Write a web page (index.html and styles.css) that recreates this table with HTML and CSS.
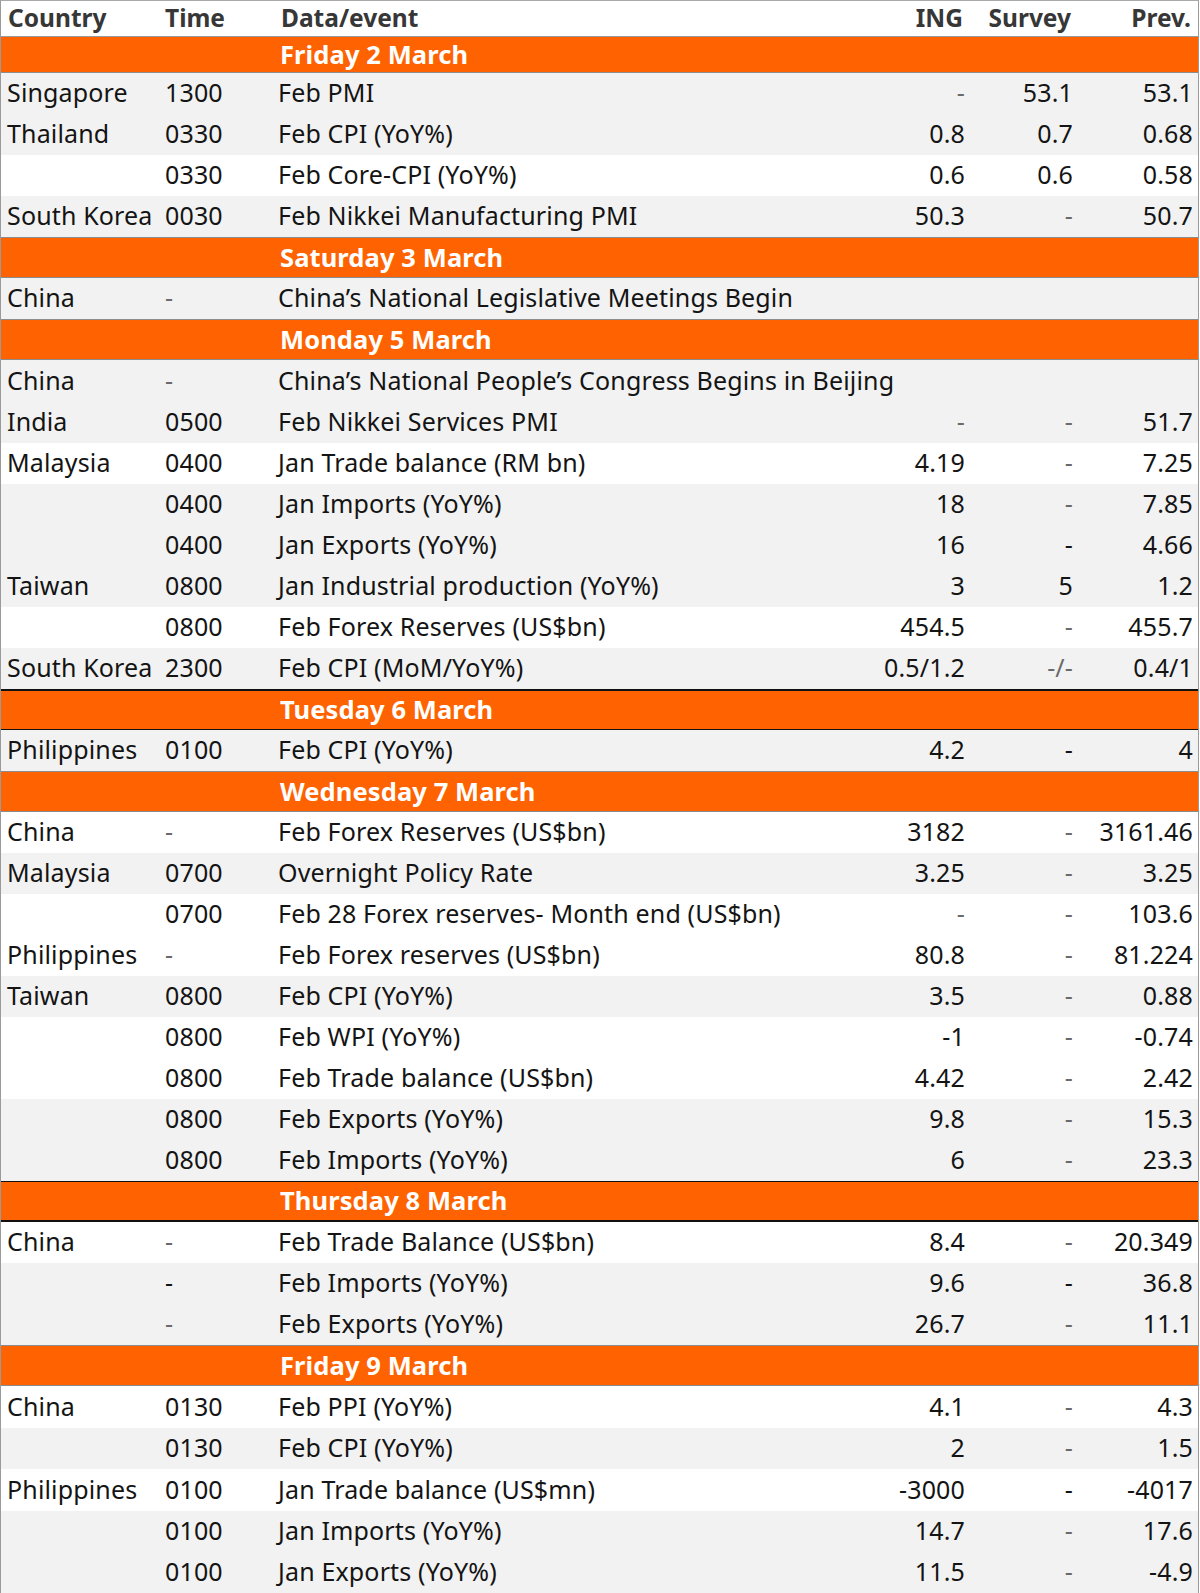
FILE: index.html
```html
<!DOCTYPE html>
<html lang="en">
<head>
<meta charset="utf-8">
<title>Asia calendar</title>
<link rel="stylesheet" href="styles.css">
</head>
<body>
<div class="table">
  <div class="row head">
    <div class="c">Country</div><div class="t">Time</div><div class="e">Data/event</div><div class="n">ING</div><div class="n">Survey</div><div class="n p">Prev.</div>
  </div>

  <div class="band b-grey first"><div class="title">Friday 2 March</div></div>
  <div class="row g"><div class="c">Singapore</div><div class="t">1300</div><div class="e">Feb PMI</div><div class="n"><span class="d">-</span></div><div class="n">53.1</div><div class="n p">53.1</div></div>
  <div class="row g"><div class="c">Thailand</div><div class="t">0330</div><div class="e">Feb CPI (YoY%)</div><div class="n">0.8</div><div class="n">0.7</div><div class="n p">0.68</div></div>
  <div class="row"><div class="c"></div><div class="t">0330</div><div class="e">Feb Core-CPI (YoY%)</div><div class="n">0.6</div><div class="n">0.6</div><div class="n p">0.58</div></div>
  <div class="row g"><div class="c">South Korea</div><div class="t">0030</div><div class="e">Feb Nikkei Manufacturing PMI</div><div class="n">50.3</div><div class="n"><span class="d">-</span></div><div class="n p">50.7</div></div>

  <div class="band b-grey top-grey"><div class="title">Saturday 3 March</div></div>
  <div class="row g"><div class="c">China</div><div class="t"><span class="d">-</span></div><div class="e">China’s National Legislative Meetings Begin</div><div class="n"></div><div class="n"></div><div class="n p"></div></div>

  <div class="band b-grey top-grey"><div class="title">Monday 5 March</div></div>
  <div class="row g tall"><div class="c">China</div><div class="t"><span class="d">-</span></div><div class="e">China’s National People’s Congress Begins in Beijing</div><div class="n"></div><div class="n"></div><div class="n p"></div></div>
  <div class="row g"><div class="c">India</div><div class="t">0500</div><div class="e">Feb Nikkei Services PMI</div><div class="n"><span class="d">-</span></div><div class="n"><span class="d">-</span></div><div class="n p">51.7</div></div>
  <div class="row"><div class="c">Malaysia</div><div class="t">0400</div><div class="e">Jan Trade balance (RM bn)</div><div class="n">4.19</div><div class="n"><span class="d">-</span></div><div class="n p">7.25</div></div>
  <div class="row g"><div class="c"></div><div class="t">0400</div><div class="e">Jan Imports (YoY%)</div><div class="n">18</div><div class="n"><span class="d">-</span></div><div class="n p">7.85</div></div>
  <div class="row g"><div class="c"></div><div class="t">0400</div><div class="e">Jan Exports (YoY%)</div><div class="n">16</div><div class="n">-</div><div class="n p">4.66</div></div>
  <div class="row g"><div class="c">Taiwan</div><div class="t">0800</div><div class="e">Jan Industrial production (YoY%)</div><div class="n">3</div><div class="n">5</div><div class="n p">1.2</div></div>
  <div class="row"><div class="c"></div><div class="t">0800</div><div class="e">Feb Forex Reserves (US$bn)</div><div class="n">454.5</div><div class="n"><span class="d">-</span></div><div class="n p">455.7</div></div>
  <div class="row g"><div class="c">South Korea</div><div class="t">2300</div><div class="e">Feb CPI (MoM/YoY%)</div><div class="n">0.5/1.2</div><div class="n"><span class="d">-/-</span></div><div class="n p">0.4/1</div></div>

  <div class="band top-black2 b-black"><div class="title">Tuesday 6 March</div></div>
  <div class="row g"><div class="c">Philippines</div><div class="t">0100</div><div class="e">Feb CPI (YoY%)</div><div class="n">4.2</div><div class="n">-</div><div class="n p">4</div></div>

  <div class="band b-grey top-grey"><div class="title">Wednesday 7 March</div></div>
  <div class="row"><div class="c">China</div><div class="t"><span class="d">-</span></div><div class="e">Feb Forex Reserves (US$bn)</div><div class="n">3182</div><div class="n"><span class="d">-</span></div><div class="n p">3161.46</div></div>
  <div class="row g"><div class="c">Malaysia</div><div class="t">0700</div><div class="e">Overnight Policy Rate</div><div class="n">3.25</div><div class="n"><span class="d">-</span></div><div class="n p">3.25</div></div>
  <div class="row"><div class="c"></div><div class="t">0700</div><div class="e">Feb 28 Forex reserves- Month end (US$bn)</div><div class="n"><span class="d">-</span></div><div class="n"><span class="d">-</span></div><div class="n p">103.6</div></div>
  <div class="row"><div class="c">Philippines</div><div class="t"><span class="d">-</span></div><div class="e">Feb Forex reserves (US$bn)</div><div class="n">80.8</div><div class="n"><span class="d">-</span></div><div class="n p">81.224</div></div>
  <div class="row g"><div class="c">Taiwan</div><div class="t">0800</div><div class="e">Feb CPI (YoY%)</div><div class="n">3.5</div><div class="n"><span class="d">-</span></div><div class="n p">0.88</div></div>
  <div class="row"><div class="c"></div><div class="t">0800</div><div class="e">Feb WPI (YoY%)</div><div class="n">-1</div><div class="n"><span class="d">-</span></div><div class="n p">-0.74</div></div>
  <div class="row"><div class="c"></div><div class="t">0800</div><div class="e">Feb Trade balance (US$bn)</div><div class="n">4.42</div><div class="n"><span class="d">-</span></div><div class="n p">2.42</div></div>
  <div class="row g"><div class="c"></div><div class="t">0800</div><div class="e">Feb Exports (YoY%)</div><div class="n">9.8</div><div class="n"><span class="d">-</span></div><div class="n p">15.3</div></div>
  <div class="row g"><div class="c"></div><div class="t">0800</div><div class="e">Feb Imports (YoY%)</div><div class="n">6</div><div class="n"><span class="d">-</span></div><div class="n p">23.3</div></div>

  <div class="band top-black b-black2"><div class="title">Thursday 8 March</div></div>
  <div class="row"><div class="c">China</div><div class="t"><span class="d">-</span></div><div class="e">Feb Trade Balance (US$bn)</div><div class="n">8.4</div><div class="n"><span class="d">-</span></div><div class="n p">20.349</div></div>
  <div class="row g"><div class="c"></div><div class="t">-</div><div class="e">Feb Imports (YoY%)</div><div class="n">9.6</div><div class="n">-</div><div class="n p">36.8</div></div>
  <div class="row g"><div class="c"></div><div class="t"><span class="d">-</span></div><div class="e">Feb Exports (YoY%)</div><div class="n">26.7</div><div class="n"><span class="d">-</span></div><div class="n p">11.1</div></div>

  <div class="band b-grey top-grey"><div class="title">Friday 9 March</div></div>
  <div class="row tall"><div class="c">China</div><div class="t">0130</div><div class="e">Feb PPI (YoY%)</div><div class="n">4.1</div><div class="n"><span class="d">-</span></div><div class="n p">4.3</div></div>
  <div class="row g"><div class="c"></div><div class="t">0130</div><div class="e">Feb CPI (YoY%)</div><div class="n">2</div><div class="n"><span class="d">-</span></div><div class="n p">1.5</div></div>
  <div class="row tall"><div class="c">Philippines</div><div class="t">0100</div><div class="e">Jan Trade balance (US$mn)</div><div class="n">-3000</div><div class="n">-</div><div class="n p">-4017</div></div>
  <div class="row g"><div class="c"></div><div class="t">0100</div><div class="e">Jan Imports (YoY%)</div><div class="n">14.7</div><div class="n"><span class="d">-</span></div><div class="n p">17.6</div></div>
  <div class="row g last"><div class="c"></div><div class="t">0100</div><div class="e">Jan Exports (YoY%)</div><div class="n">11.5</div><div class="n"><span class="d">-</span></div><div class="n p">-4.9</div></div>
</div>
</body>
</html>
```

FILE: styles.css
```css
* { box-sizing: border-box; }

html, body {
  margin: 0;
  padding: 0;
  background: #ffffff;
}

body {
  font-family: "Noto Sans", "Open Sans", "DejaVu Sans", sans-serif;
  font-size: 25px;
  letter-spacing: 0.15px;
  color: #141414;
}

.table {
  width: 1199px;
  border-left: 1px solid #9a9a9a;
  border-right: 1px solid #9a9a9a;
  border-top: 1px solid #a8a8a8;
}

.row,
.band {
  display: grid;
  grid-template-columns: 158px 113px 1fr 108px 108px 122px;
  align-items: center;
  height: 41px;
  white-space: nowrap;
}

.row.tall { height: 42px; }

.row.g { background: #f2f2f2; }

.row.last { border-bottom: 1px solid #9a9a9a; height: 42px; }

.row > div { padding-bottom: 3px; }

.head {
  height: 36px;
  font-weight: 700;
  color: #373737;
  border-bottom: 1px solid #9a9a9a;
  font-size: 24.5px;
  letter-spacing: 0;
}

.c { padding-left: 6px; }
.t { padding-left: 6px; }
.e { padding-left: 6px; overflow: visible; }
.n { text-align: right; padding-right: 3px; }
.n.p { padding-right: 5px; }

.head .c { padding-left: 7px; }
.head .t { padding-left: 6px; }
.head .e { padding-left: 9px; }
.head .n { padding-right: 5px; }
.head .n.p { padding-right: 7px; }

.d {
  color: #6a6a6a;
}

.band {
  background: #ff6200;
  color: #ffffff;
  font-weight: 700;
  font-size: 25.5px;
  letter-spacing: 0.1px;
}

.band.first { height: 36px; }

.band .title {
  grid-column: 3 / -1;
  padding-left: 8px;
  padding-bottom: 2px;
}

.b-grey { border-bottom: 1px solid #8c8c8c; }
.top-grey { border-top: 1px solid #8c8c8c; }
.b-black { border-bottom: 1px solid #111111; }
.b-black2 { border-bottom: 2px solid #111111; }
.top-black { border-top: 1px solid #111111; }
.top-black2 { border-top: 2px solid #111111; }
```
